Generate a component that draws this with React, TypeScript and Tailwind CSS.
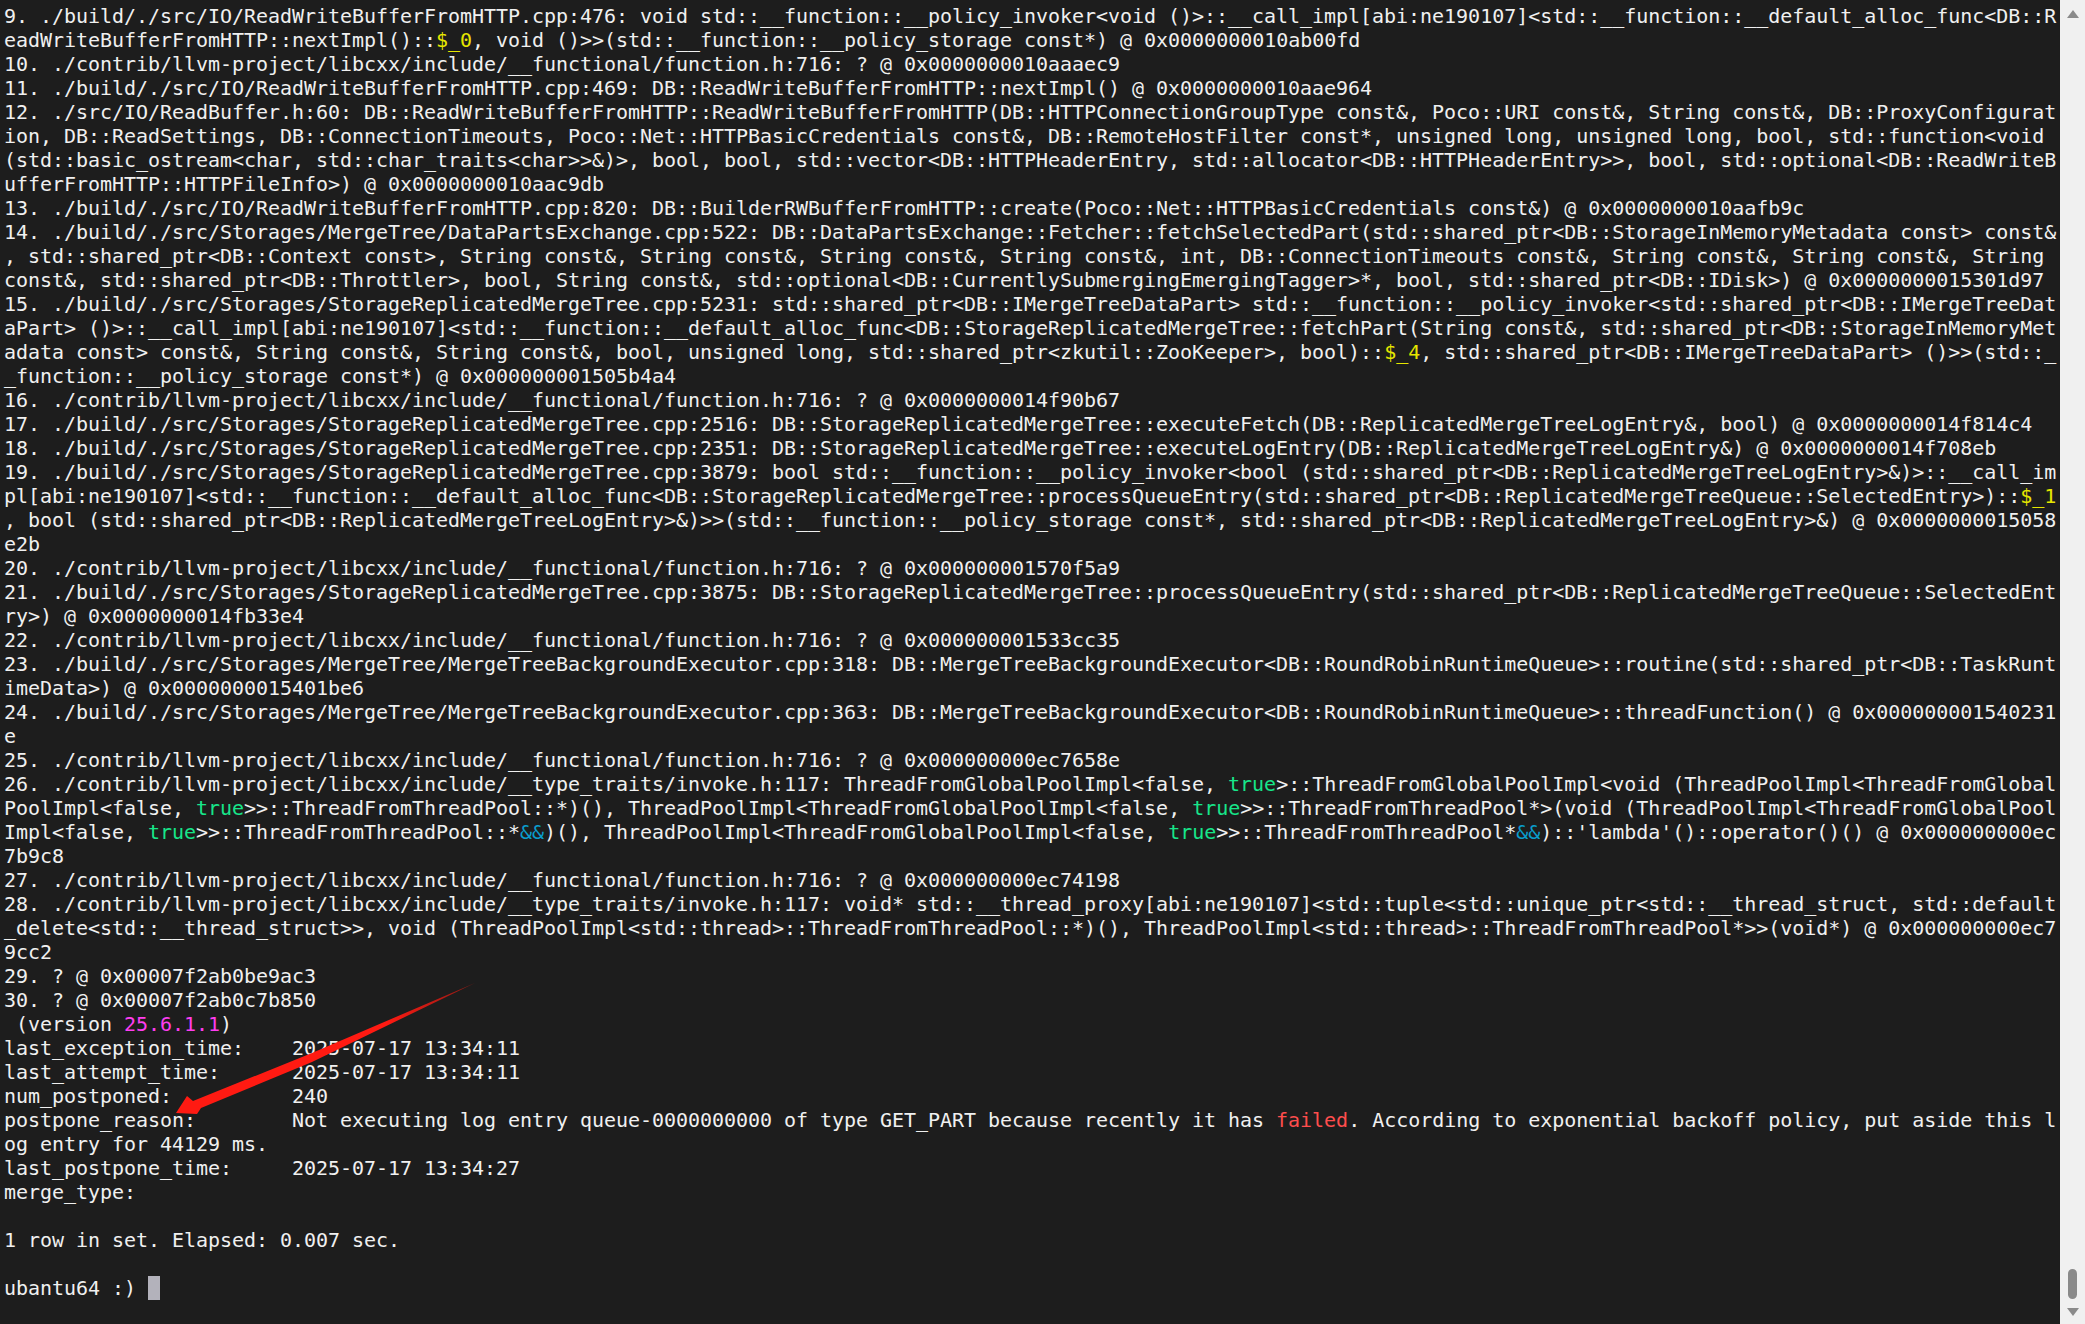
type Part = string | { t: string; c: string };

const Y = "text-[#e6e600]";
const G = "text-[#17e68a]";
const C = "text-[#0a9ccc]";
const M = "text-[#ff3df0]";
const R = "text-[#ff4d4d]";

// one entry per row on screen, the terminal wraps at a fixed column
const rows: Part[][] = [
  ["9. ./build/./src/IO/ReadWriteBufferFromHTTP.cpp:476: void std::__function::__policy_invoker<void ()>::__call_impl[abi:ne190107]<std::__function::__default_alloc_func<DB::R"],
  ["eadWriteBufferFromHTTP::nextImpl()::", { t: "$_0", c: Y }, ", void ()>>(std::__function::__policy_storage const*) @ 0x0000000010ab00fd"],
  ["10. ./contrib/llvm-project/libcxx/include/__functional/function.h:716: ? @ 0x0000000010aaaec9"],
  ["11. ./build/./src/IO/ReadWriteBufferFromHTTP.cpp:469: DB::ReadWriteBufferFromHTTP::nextImpl() @ 0x0000000010aae964"],
  ["12. ./src/IO/ReadBuffer.h:60: DB::ReadWriteBufferFromHTTP::ReadWriteBufferFromHTTP(DB::HTTPConnectionGroupType const&, Poco::URI const&, String const&, DB::ProxyConfigurat"],
  ["ion, DB::ReadSettings, DB::ConnectionTimeouts, Poco::Net::HTTPBasicCredentials const&, DB::RemoteHostFilter const*, unsigned long, unsigned long, bool, std::function<void"],
  ["(std::basic_ostream<char, std::char_traits<char>>&)>, bool, bool, std::vector<DB::HTTPHeaderEntry, std::allocator<DB::HTTPHeaderEntry>>, bool, std::optional<DB::ReadWriteB"],
  ["ufferFromHTTP::HTTPFileInfo>) @ 0x0000000010aac9db"],
  ["13. ./build/./src/IO/ReadWriteBufferFromHTTP.cpp:820: DB::BuilderRWBufferFromHTTP::create(Poco::Net::HTTPBasicCredentials const&) @ 0x0000000010aafb9c"],
  ["14. ./build/./src/Storages/MergeTree/DataPartsExchange.cpp:522: DB::DataPartsExchange::Fetcher::fetchSelectedPart(std::shared_ptr<DB::StorageInMemoryMetadata const> const&"],
  [", std::shared_ptr<DB::Context const>, String const&, String const&, String const&, String const&, int, DB::ConnectionTimeouts const&, String const&, String const&, String"],
  ["const&, std::shared_ptr<DB::Throttler>, bool, String const&, std::optional<DB::CurrentlySubmergingEmergingTagger>*, bool, std::shared_ptr<DB::IDisk>) @ 0x0000000015301d97"],
  ["15. ./build/./src/Storages/StorageReplicatedMergeTree.cpp:5231: std::shared_ptr<DB::IMergeTreeDataPart> std::__function::__policy_invoker<std::shared_ptr<DB::IMergeTreeDat"],
  ["aPart> ()>::__call_impl[abi:ne190107]<std::__function::__default_alloc_func<DB::StorageReplicatedMergeTree::fetchPart(String const&, std::shared_ptr<DB::StorageInMemoryMet"],
  ["adata const> const&, String const&, String const&, bool, unsigned long, std::shared_ptr<zkutil::ZooKeeper>, bool)::", { t: "$_4", c: Y }, ", std::shared_ptr<DB::IMergeTreeDataPart> ()>>(std::_"],
  ["_function::__policy_storage const*) @ 0x000000001505b4a4"],
  ["16. ./contrib/llvm-project/libcxx/include/__functional/function.h:716: ? @ 0x0000000014f90b67"],
  ["17. ./build/./src/Storages/StorageReplicatedMergeTree.cpp:2516: DB::StorageReplicatedMergeTree::executeFetch(DB::ReplicatedMergeTreeLogEntry&, bool) @ 0x0000000014f814c4"],
  ["18. ./build/./src/Storages/StorageReplicatedMergeTree.cpp:2351: DB::StorageReplicatedMergeTree::executeLogEntry(DB::ReplicatedMergeTreeLogEntry&) @ 0x0000000014f708eb"],
  ["19. ./build/./src/Storages/StorageReplicatedMergeTree.cpp:3879: bool std::__function::__policy_invoker<bool (std::shared_ptr<DB::ReplicatedMergeTreeLogEntry>&)>::__call_im"],
  ["pl[abi:ne190107]<std::__function::__default_alloc_func<DB::StorageReplicatedMergeTree::processQueueEntry(std::shared_ptr<DB::ReplicatedMergeTreeQueue::SelectedEntry>)::", { t: "$_1", c: Y }],
  [", bool (std::shared_ptr<DB::ReplicatedMergeTreeLogEntry>&)>>(std::__function::__policy_storage const*, std::shared_ptr<DB::ReplicatedMergeTreeLogEntry>&) @ 0x0000000015058"],
  ["e2b"],
  ["20. ./contrib/llvm-project/libcxx/include/__functional/function.h:716: ? @ 0x000000001570f5a9"],
  ["21. ./build/./src/Storages/StorageReplicatedMergeTree.cpp:3875: DB::StorageReplicatedMergeTree::processQueueEntry(std::shared_ptr<DB::ReplicatedMergeTreeQueue::SelectedEnt"],
  ["ry>) @ 0x0000000014fb33e4"],
  ["22. ./contrib/llvm-project/libcxx/include/__functional/function.h:716: ? @ 0x000000001533cc35"],
  ["23. ./build/./src/Storages/MergeTree/MergeTreeBackgroundExecutor.cpp:318: DB::MergeTreeBackgroundExecutor<DB::RoundRobinRuntimeQueue>::routine(std::shared_ptr<DB::TaskRunt"],
  ["imeData>) @ 0x0000000015401be6"],
  ["24. ./build/./src/Storages/MergeTree/MergeTreeBackgroundExecutor.cpp:363: DB::MergeTreeBackgroundExecutor<DB::RoundRobinRuntimeQueue>::threadFunction() @ 0x000000001540231"],
  ["e"],
  ["25. ./contrib/llvm-project/libcxx/include/__functional/function.h:716: ? @ 0x000000000ec7658e"],
  ["26. ./contrib/llvm-project/libcxx/include/__type_traits/invoke.h:117: ThreadFromGlobalPoolImpl<false, ", { t: "true", c: G }, ">::ThreadFromGlobalPoolImpl<void (ThreadPoolImpl<ThreadFromGlobal"],
  ["PoolImpl<false, ", { t: "true", c: G }, ">>::ThreadFromThreadPool::*)(), ThreadPoolImpl<ThreadFromGlobalPoolImpl<false, ", { t: "true", c: G }, ">>::ThreadFromThreadPool*>(void (ThreadPoolImpl<ThreadFromGlobalPool"],
  ["Impl<false, ", { t: "true", c: G }, ">>::ThreadFromThreadPool::*", { t: "&&", c: C }, ")(), ThreadPoolImpl<ThreadFromGlobalPoolImpl<false, ", { t: "true", c: G }, ">>::ThreadFromThreadPool*", { t: "&&", c: C }, ")::'lambda'()::operator()() @ 0x000000000ec"],
  ["7b9c8"],
  ["27. ./contrib/llvm-project/libcxx/include/__functional/function.h:716: ? @ 0x000000000ec74198"],
  ["28. ./contrib/llvm-project/libcxx/include/__type_traits/invoke.h:117: void* std::__thread_proxy[abi:ne190107]<std::tuple<std::unique_ptr<std::__thread_struct, std::default"],
  ["_delete<std::__thread_struct>>, void (ThreadPoolImpl<std::thread>::ThreadFromThreadPool::*)(), ThreadPoolImpl<std::thread>::ThreadFromThreadPool*>>(void*) @ 0x000000000ec7"],
  ["9cc2"],
  ["29. ? @ 0x00007f2ab0be9ac3"],
  ["30. ? @ 0x00007f2ab0c7b850"],
  [" (version ", { t: "25.6.1.1", c: M }, ")"],
  ["last_exception_time:    2025-07-17 13:34:11"],
  ["last_attempt_time:      2025-07-17 13:34:11"],
  ["num_postponed:          240"],
  ["postpone_reason:        Not executing log entry queue-0000000000 of type GET_PART because recently it has ", { t: "failed", c: R }, ". According to exponential backoff policy, put aside this l"],
  ["og entry for 44129 ms."],
  ["last_postpone_time:     2025-07-17 13:34:27"],
  ["merge_type:"],
  [""],
  ["1 row in set. Elapsed: 0.007 sec."],
  [""],
];

function Row({ parts }: { parts: Part[] }) {
  return (
    <div className="h-6 whitespace-pre">
      {parts.map((p, i) =>
        typeof p === "string" ? (
          <span key={i}>{p}</span>
        ) : (
          <span key={i} className={p.c}>
            {p.t}
          </span>
        )
      )}
    </div>
  );
}

export default function App() {
  return (
    <div className="flex h-[1324px] w-full overflow-hidden bg-[#f0f0f0]">
      <main className="relative min-w-0 flex-1 overflow-hidden bg-[#1d1d1d] pl-[4px] pt-[4px] font-['DejaVu_Sans_Mono',monospace] text-[20px] leading-6 tracking-[-0.04px] text-[#f0f0f0]">
        {rows.map((parts, i) => (
          <Row key={i} parts={parts} />
        ))}
        <div className="flex h-6 items-center whitespace-pre">
          <span>ubantu64 :) </span>
          <span className="h-6 w-3 bg-[#b3b2bb]" />
        </div>

        {/* red annotation arrow pasted on top of the terminal */}
        <svg className="absolute left-0 top-0" width="2060" height="1324" viewBox="0 0 2060 1324" fill="none">
          <defs>
            <linearGradient id="arrowFade" gradientUnits="userSpaceOnUse" x1="176" y1="1113" x2="475" y2="983">
              <stop offset="0.7" stopColor="#ff1a12" />
              <stop offset="1" stopColor="#8c1a14" />
            </linearGradient>
          </defs>
          <polygon points="176,1113 187,1096 193,1101 312,1053 475,983 312,1062 201,1108 197,1114" fill="url(#arrowFade)" />
        </svg>
      </main>

      <aside className="flex w-[25px] shrink-0 flex-col items-center justify-between pb-2 pt-[10px]">
        <svg width="12" height="8" viewBox="0 0 12 8" fill="#8a8a8a">
          <polygon points="6,0 12,8 0,8" />
        </svg>
        <div className="flex flex-col items-center gap-[9px]">
          <div className="h-[30px] w-[9px] rounded-full bg-[#8a8a8a]" />
          <svg width="12" height="8" viewBox="0 0 12 8" fill="#8a8a8a">
            <polygon points="0,0 12,0 6,8" />
          </svg>
        </div>
      </aside>
    </div>
  );
}
